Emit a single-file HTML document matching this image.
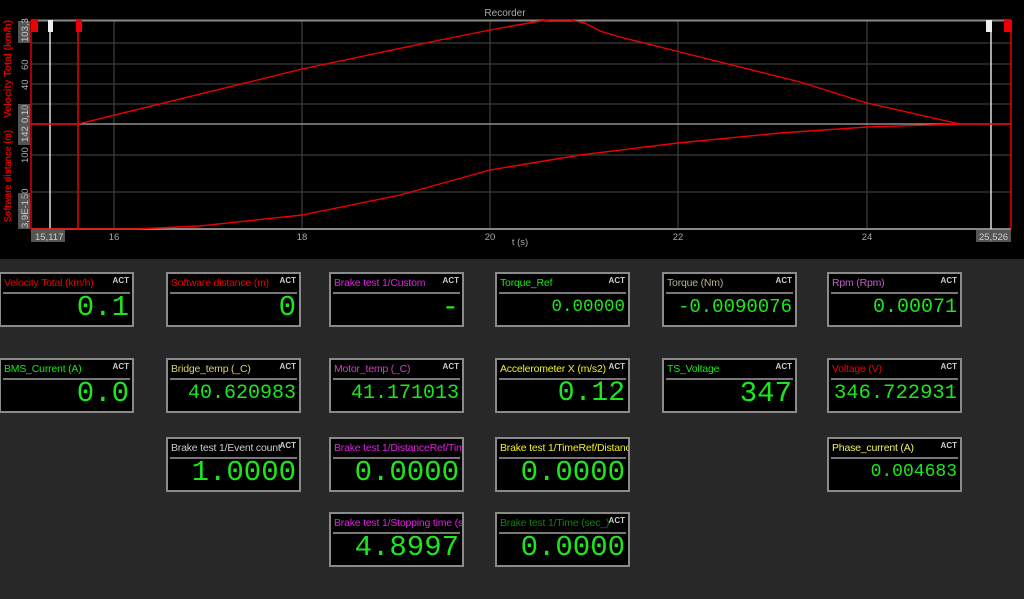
<!DOCTYPE html>
<html><head><meta charset="utf-8"><style>
body{margin:0;width:1024px;height:599px;background:#282828;overflow:hidden;position:relative;font-family:"Liberation Sans",Arial,sans-serif}
#top{position:absolute;left:0;top:0;width:1024px;height:259px;background:#000}
.b{position:absolute;width:131px;height:51px;background:#000;border:2px solid #8a8a8a;box-sizing:content-box}
.t{position:absolute;left:3px;top:3px;font-size:10.5px;white-space:nowrap;overflow:hidden;width:128px;letter-spacing:-0.2px}
.a{position:absolute;right:3px;top:2px;font-size:8px;color:#ccc;background:#000;font-weight:bold}
.l{position:absolute;left:2px;right:2px;top:18px;height:2px;background:#777}
.v{position:absolute;right:3px;top:18px;height:31px;line-height:31px;font-family:"Liberation Mono",monospace;color:#1ee61e;white-space:nowrap}
</style></head><body>
<div id="top"></div>
<svg width="1024" height="259" style="position:absolute;left:0;top:0">
<text x="505" y="16" fill="#aaa" font-size="10" text-anchor="middle" font-family="Liberation Sans">Recorder</text>
<g stroke="#3a3a3a" stroke-width="1.3">
<line x1="31" y1="43" x2="1011" y2="43"/><line x1="31" y1="64" x2="1011" y2="64"/><line x1="31" y1="84" x2="1011" y2="84"/><line x1="31" y1="104" x2="1011" y2="104"/><line x1="31" y1="155" x2="1011" y2="155"/><line x1="31" y1="192" x2="1011" y2="192"/>
<line x1="114" y1="20" x2="114" y2="229"/><line x1="302" y1="20" x2="302" y2="229"/><line x1="490" y1="20" x2="490" y2="229"/><line x1="678" y1="20" x2="678" y2="229"/><line x1="867" y1="20" x2="867" y2="229"/>
</g>
<line x1="31" y1="20.5" x2="1011" y2="20.5" stroke="#888" stroke-width="2"/>
<line x1="31" y1="229" x2="1011" y2="229" stroke="#888" stroke-width="2"/>
<line x1="31" y1="124" x2="1011" y2="124" stroke="#aaa" stroke-width="1.2"/>
<line x1="31" y1="20" x2="31" y2="229" stroke="#d00" stroke-width="1.5"/>
<line x1="50" y1="20" x2="50" y2="229" stroke="#ddd" stroke-width="1.5"/>
<line x1="78" y1="20" x2="78" y2="229" stroke="#e00" stroke-width="1.5"/>
<line x1="991" y1="20" x2="991" y2="229" stroke="#ddd" stroke-width="1.5"/>
<line x1="1011" y1="20" x2="1011" y2="229" stroke="#e00" stroke-width="1.5"/>
<polyline fill="none" stroke="#e00" stroke-width="1.4" points="31,124 78,124 302,69 440,40 490,30 540,21 550,20 570,20 585,23 600,31 620,37 680,52 800,82 867,103 960,124 1011,124"/>
<polyline fill="none" stroke="#e00" stroke-width="1.4" points="31,229 135,229 200,226 302,215 400,195 490,170 580,155 678,143 780,133 867,127 960,124"/>
<rect x="31" y="20" width="7" height="12" fill="#e00"/><rect x="48" y="20" width="5" height="12" fill="#eee"/><rect x="76" y="20" width="6" height="12" fill="#e00"/>
<rect x="986" y="20" width="6" height="12" fill="#eee"/><rect x="1004" y="20" width="8" height="12" fill="#e00"/>
<g fill="#555"><rect x="18" y="21" width="12" height="22"/><rect x="18" y="104" width="12" height="20"/><rect x="18" y="124" width="12" height="21"/><rect x="18" y="193" width="12" height="36"/><rect x="31" y="230" width="34" height="12"/><rect x="976" y="230" width="35" height="12"/></g>
<g font-size="9.5" fill="#ccc" font-family="Liberation Sans">
<text x="35" y="240">15,117</text><text x="979" y="240">25,526</text>
<text x="114" y="240" text-anchor="middle" fill="#aaa">16</text><text x="302" y="240" text-anchor="middle" fill="#aaa">18</text><text x="490" y="240" text-anchor="middle" fill="#aaa">20</text><text x="678" y="240" text-anchor="middle" fill="#aaa">22</text><text x="867" y="240" text-anchor="middle" fill="#aaa">24</text>
<text x="520" y="245" text-anchor="middle" fill="#aaa">t (s)</text>
<g transform="rotate(-90)"><text x="-42" y="28">103,3</text><text x="-70" y="28" fill="#aaa">60</text><text x="-90" y="28" fill="#aaa">40</text><text x="-110" y="28" fill="#aaa">0</text><text x="-123" y="28">0,1</text><text x="-142" y="28">142</text><text x="-163" y="28" fill="#aaa">100</text><text x="-199" y="28" fill="#aaa">50</text><text x="-228" y="28">3,9E-1</text>
<text x="-118" y="11" fill="#d00" font-weight="bold" font-size="10" textLength="98" lengthAdjust="spacingAndGlyphs">Velocity Total (km/h)</text>
<text x="-222" y="11" fill="#d00" font-weight="bold" font-size="10" textLength="92" lengthAdjust="spacingAndGlyphs">Software distance (m)</text></g>
</g>
</svg>

<div class="b" style="left:-1px;top:272px"><div class="t" style="color:#e00">Velocity Total (km/h)</div><div class="a">ACT</div><div class="l"></div><div class="v" style="font-size:29px">0.1</div></div>
<div class="b" style="left:166px;top:272px"><div class="t" style="color:#e00">Software distance (m)</div><div class="a">ACT</div><div class="l"></div><div class="v" style="font-size:29px">0</div></div>
<div class="b" style="left:329px;top:272px"><div class="t" style="color:#e020e0">Brake test 1/Custom</div><div class="a">ACT</div><div class="l"></div><div class="v" style="font-size:29px">-</div></div>
<div class="b" style="left:495px;top:272px"><div class="t" style="color:#1ee61e">Torque_Ref</div><div class="a">ACT</div><div class="l"></div><div class="v" style="font-size:17.5px">0.00000</div></div>
<div class="b" style="left:662px;top:272px"><div class="t" style="color:#b8b090">Torque (Nm)</div><div class="a">ACT</div><div class="l"></div><div class="v" style="font-size:19px">-0.0090076</div></div>
<div class="b" style="left:827px;top:272px"><div class="t" style="color:#c060c0">Rpm (Rpm)</div><div class="a">ACT</div><div class="l"></div><div class="v" style="font-size:20px">0.00071</div></div>

<div class="b" style="left:-1px;top:358px"><div class="t" style="color:#1ee61e">BMS_Current (A)</div><div class="a">ACT</div><div class="l"></div><div class="v" style="font-size:29px">0.0</div></div>
<div class="b" style="left:166px;top:358px"><div class="t" style="color:#d8d070">Bridge_temp (_C)</div><div class="a">ACT</div><div class="l"></div><div class="v" style="font-size:20px">40.620983</div></div>
<div class="b" style="left:329px;top:358px"><div class="t" style="color:#d040c0">Motor_temp (_C)</div><div class="a">ACT</div><div class="l"></div><div class="v" style="font-size:20px">41.171013</div></div>
<div class="b" style="left:495px;top:358px"><div class="t" style="color:#f0f020">Accelerometer X (m/s2)</div><div class="a">ACT</div><div class="l"></div><div class="v" style="font-size:28px">0.12</div></div>
<div class="b" style="left:662px;top:358px"><div class="t" style="color:#1ee61e">TS_Voltage</div><div class="a">ACT</div><div class="l"></div><div class="v" style="font-size:29px">347</div></div>
<div class="b" style="left:827px;top:358px"><div class="t" style="color:#e00">Voltage (V)</div><div class="a">ACT</div><div class="l"></div><div class="v" style="font-size:20.5px">346.722931</div></div>

<div class="b" style="left:166px;top:437px"><div class="t" style="color:#ccc">Brake test 1/Event count</div><div class="a">ACT</div><div class="l"></div><div class="v" style="font-size:29px">1.0000</div></div>
<div class="b" style="left:329px;top:437px"><div class="t" style="color:#e020e0">Brake test 1/DistanceRef/Time</div><div class="l"></div><div class="v" style="font-size:29px">0.0000</div></div>
<div class="b" style="left:495px;top:437px"><div class="t" style="color:#f0f020">Brake test 1/TimeRef/Distance</div><div class="l"></div><div class="v" style="font-size:29px">0.0000</div></div>
<div class="b" style="left:827px;top:437px"><div class="t" style="color:#f0f060">Phase_current (A)</div><div class="a">ACT</div><div class="l"></div><div class="v" style="font-size:18px">0.004683</div></div>

<div class="b" style="left:329px;top:512px"><div class="t" style="color:#e020e0">Brake test 1/Stopping time (s)</div><div class="l"></div><div class="v" style="font-size:29px">4.8997</div></div>
<div class="b" style="left:495px;top:512px"><div class="t" style="color:#108010">Brake test 1/Time (sec_)</div><div class="a">ACT</div><div class="l"></div><div class="v" style="font-size:29px">0.0000</div></div>
</body></html>
